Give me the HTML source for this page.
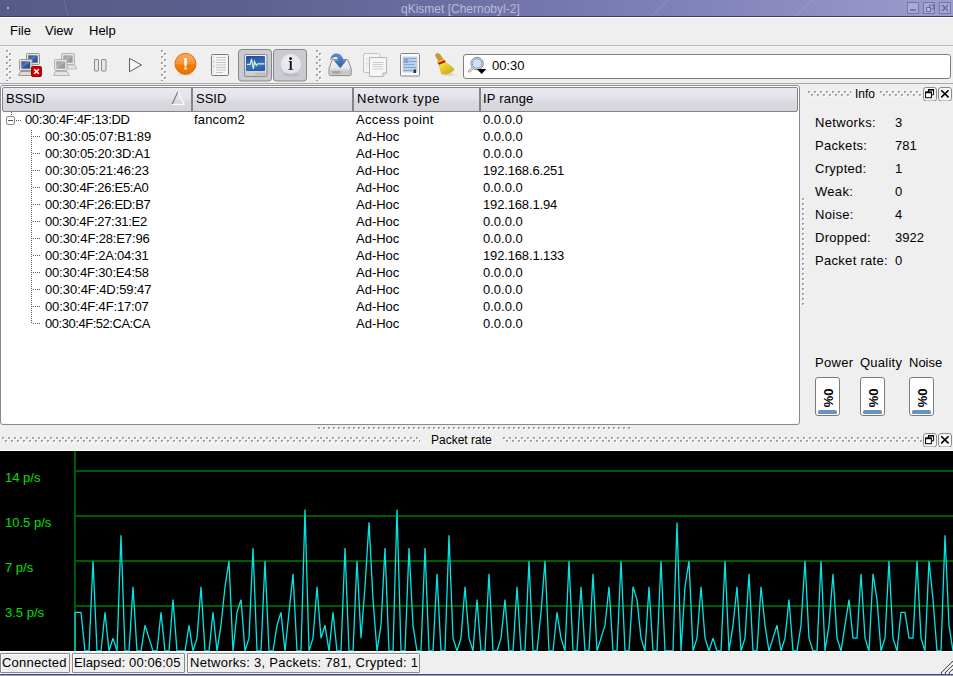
<!DOCTYPE html>
<html><head><meta charset="utf-8">
<style>
*{box-sizing:border-box;margin:0;padding:0}
html,body{width:953px;height:676px;overflow:hidden;background:#efefef;font-family:"Liberation Sans",sans-serif;font-size:13px;color:#000}
.a{position:absolute}
.t{position:absolute;white-space:pre;line-height:15px}
#title{left:0;top:0;width:953px;height:17px;background:linear-gradient(90deg,#585b87 0%,#5d608e 25%,#6e70a6 50%,#8484bc 75%,#9c9ccf 100%);border-bottom:1px solid #3c3f5c}
#title .tt{left:401px;top:2px;color:#b9bad6;font-size:12px;line-height:14px}
.wb{top:2px;width:12px;height:12px;border:1px solid #8a88b8;background:#a9a7d6}
#menu{left:0;top:17px;width:953px;height:29px;background:#efefef;border-top:1px solid #fff;border-bottom:1px solid #b9b9b9}
#tool{left:0;top:46px;width:953px;height:38px;background:#efefef;border-top:1px solid #fafafa;border-bottom:1px solid #a8a8a8}
.handle{width:6px;height:30px;background-image:radial-gradient(circle at 1px 1px,#9a9a9a 0.9px,transparent 1.1px);background-size:3px 6px}
#list{left:0;top:85px;width:800px;height:340px;background:#fff;border:1px solid #8a8a8a;border-radius:3px}
.hdr{top:87px;height:25px;background:linear-gradient(#ebeaf0,#e3e2ea 45%,#dadbe0 55%,#d5d6db);border:1px solid #858585;border-radius:2px}
.hsep{top:88px;width:2px;height:23px;background:#858585}
.row{position:absolute;white-space:pre;line-height:17px;height:17px}
.dock-t{height:11px}
.dots{background-image:radial-gradient(circle at 1.5px 1.5px,#b8b8b8 0.8px,transparent 1px);background-size:4px 3px}
.fbtn{width:14px;height:14px;border:1px solid #7c7c7c;border-radius:2px;background:#f4f4f4}
.pbar{width:25px;height:39px;background:#fff;border:1px solid #7c7c7c;border-radius:3px}
.pbar .blue{left:2px;right:2px;bottom:1px;height:4px;background:#6b92bb;border-radius:2px 2px 1px 1px}
.pbar .pt{left:0;top:10px;width:23px;height:20px;font-weight:bold;font-size:13px;line-height:20px;text-align:center;transform:rotate(90deg)}
#graph{left:0;top:451px;width:953px;height:200px;background:#000}
.gl{color:#00e000;font-size:13px}
.sb{top:653px;height:20px;border:1px solid #8a8a8a;border-radius:1px;background:#efefef;box-shadow:inset 1px 1px 0 #fff}
</style></head><body>

<svg width="0" height="0" style="position:absolute"><defs>
<pattern id="ph" width="6" height="6" patternUnits="userSpaceOnUse"><rect x="2" y="1" width="1" height="2" fill="#fff"/><rect x="1" y="2" width="1" height="1" fill="#fff"/><rect x="0" y="0" width="2" height="1" fill="#9c9c9c"/><rect x="0" y="1" width="1" height="1" fill="#9c9c9c"/><rect x="1" y="1" width="1" height="1" fill="#c4c4c4"/><rect x="5" y="4" width="1" height="2" fill="#fff"/><rect x="4" y="5" width="1" height="1" fill="#fff"/><rect x="3" y="3" width="2" height="1" fill="#9c9c9c"/><rect x="3" y="4" width="1" height="1" fill="#9c9c9c"/><rect x="4" y="4" width="1" height="1" fill="#c4c4c4"/></pattern>
</defs></svg>
<!-- title bar -->
<div id="title" class="a"><svg class="a" style="left:0;top:0" width="953" height="16"><g stroke="#fff" stroke-width="1" opacity="0.13"><path d="M64 0 L68 16"/><path d="M668 0 L652 16"/><path d="M812 0 L796 16"/></g><rect x="7" y="7" width="2" height="2" fill="#b0b4c0"/></svg><div class="a tt">qKismet [Chernobyl-2]</div>
<svg class="a" style="left:906px;top:2px" width="46" height="13">
<g fill="#a9a8d8" stroke="#77769f" stroke-width="1"><rect x="1.5" y="0.5" width="11" height="11"/><rect x="17.5" y="0.5" width="11" height="11"/><rect x="33.5" y="0.5" width="11" height="11"/></g>
<rect x="4" y="7.2" width="6" height="1.6" fill="#6e6d98"/>
<rect x="23.5" y="3" width="4" height="4" fill="none" stroke="#6e6d98" stroke-width="1"/><rect x="20.5" y="5.5" width="4" height="4" fill="#b8b8e0" stroke="#6e6d98" stroke-width="1"/>
<path d="M36 3 L42 9 M42 3 L36 9" stroke="#6e6d98" stroke-width="1.6"/>
</svg>
</div>

<!-- menu -->
<div id="menu" class="a">
<div class="t" style="left:10px;top:5px">File</div>
<div class="t" style="left:45px;top:5px">View</div>
<div class="t" style="left:89px;top:5px">Help</div>
</div>

<!-- toolbar -->
<div id="tool" class="a">
<svg class="a" style="left:6px;top:3px" width="6" height="31"><rect width="6" height="31" fill="url(#ph)"/></svg>
<svg class="a" style="left:161px;top:3px" width="6" height="31"><rect width="6" height="31" fill="url(#ph)"/></svg>
<svg class="a" style="left:316px;top:3px" width="6" height="31"><rect width="6" height="31" fill="url(#ph)"/></svg>
<div class="a" style="left:463px;top:7px;width:488px;height:25px;background:#fff;border:1px solid #7e7e7e;border-radius:3px"></div>
<!--ICONS--><svg class="a" style="left:0;top:-1px" width="500" height="38" viewBox="0 46 500 38">
<defs>
<linearGradient id="gscr" x1="0" y1="0" x2="1" y2="1"><stop offset="0" stop-color="#2e4f8f"/><stop offset="0.5" stop-color="#5a7ab8"/><stop offset="0.52" stop-color="#3a5a9c"/><stop offset="1" stop-color="#2a4a88"/></linearGradient>
<linearGradient id="gscrg" x1="0" y1="0" x2="1" y2="1"><stop offset="0" stop-color="#9a9a9a"/><stop offset="0.5" stop-color="#b4b4b4"/><stop offset="0.52" stop-color="#a0a0a0"/><stop offset="1" stop-color="#989898"/></linearGradient>
<linearGradient id="gor" x1="0" y1="0" x2="0" y2="1"><stop offset="0" stop-color="#f9a850"/><stop offset="0.5" stop-color="#f7953a"/><stop offset="0.55" stop-color="#f57900"/><stop offset="1" stop-color="#f27400"/></linearGradient>
<linearGradient id="gmon" x1="0" y1="0" x2="0" y2="1"><stop offset="0" stop-color="#f4f4f4"/><stop offset="1" stop-color="#c8c8c4"/></linearGradient>
<linearGradient id="gmscr" x1="0" y1="0" x2="0.3" y2="1"><stop offset="0" stop-color="#1f4a9a"/><stop offset="0.7" stop-color="#3a72c8"/><stop offset="1" stop-color="#2a5cb0"/></linearGradient>
<radialGradient id="ginfo" cx="0.45" cy="0.35" r="0.75"><stop offset="0" stop-color="#f0eef2"/><stop offset="0.75" stop-color="#e6e4e8"/><stop offset="1" stop-color="#d2d0d4"/></radialGradient>
<linearGradient id="gdrv" x1="0" y1="0" x2="0" y2="1"><stop offset="0" stop-color="#f8f8f8"/><stop offset="1" stop-color="#dcdcdc"/></linearGradient>
<linearGradient id="gbroom" x1="0" y1="0" x2="1" y2="1"><stop offset="0" stop-color="#fce94f"/><stop offset="1" stop-color="#c4a000"/></linearGradient>
</defs>
<!-- icon 1: network with red x -->
<rect x="26.5" y="53.5" width="13" height="11" rx="1" fill="#e2e2dc" stroke="#98988f"/>
<rect x="28.3" y="55.3" width="9.4" height="7.4" fill="url(#gscr)"/>
<rect x="19.5" y="59.5" width="12.5" height="11" rx="1" fill="#e2e2dc" stroke="#98988f"/>
<rect x="21.3" y="61.3" width="8.9" height="7.4" fill="url(#gscr)"/>
<path d="M20.5 71.5 L30.5 71.5 L32 75.5 L18.5 75.5 Z" fill="#dcdcd6" stroke="#9a9a92"/>
<rect x="31.5" y="66.5" width="10" height="10" rx="1.5" fill="#d40000" stroke="#a00000"/>
<path d="M34.2 69.2 L38.8 73.8 M38.8 69.2 L34.2 73.8" stroke="#fff" stroke-width="1.6"/>
<!-- icon 2: gray network -->
<rect x="61.5" y="53.5" width="13" height="11" rx="1" fill="#e6e6e6" stroke="#b0b0b0"/>
<rect x="63.3" y="55.3" width="9.4" height="7.4" fill="url(#gscrg)"/>
<path d="M67 65 L75 65 L76.5 69 L67 69 Z" fill="#e4e4e4" stroke="#bcbcbc"/>
<rect x="54.5" y="59.5" width="12.5" height="11" rx="1" fill="#e6e6e6" stroke="#b0b0b0"/>
<rect x="56.3" y="61.3" width="8.9" height="7.4" fill="url(#gscrg)"/>
<path d="M55.5 71.5 L67 71.5 L69.5 75.5 L53.5 75.5 Z" fill="#e4e4e4" stroke="#b4b4b4"/>
<!-- pause -->
<rect x="94.5" y="59.5" width="4" height="11.5" rx="0.5" fill="#e6e6e6" stroke="#8c8c8c"/>
<rect x="101.5" y="59.5" width="4.5" height="11.5" rx="0.5" fill="#e6e6e6" stroke="#8c8c8c"/>
<!-- play -->
<path d="M129.5 58.3 L141.5 65 L129.5 71.7 Z" fill="#f6f6f6" stroke="#5e5e5e"/>
<!-- warning orange -->
<ellipse cx="185.5" cy="74" rx="8" ry="2" fill="#000" opacity="0.08"/>
<circle cx="185.5" cy="63.8" r="10.5" fill="url(#gor)" stroke="#ce5c00" stroke-width="0.8"/>
<path d="M184 58 L187 58 L186.5 66.5 L184.5 66.5 Z" fill="#fff"/>
<rect x="184.3" y="67.5" width="2.4" height="2" fill="#fff"/>
<!-- document -->
<rect x="211.5" y="54.5" width="17" height="21" rx="1" fill="#f6f6f6" stroke="#787878"/>
<rect x="213" y="56" width="1.5" height="18" fill="#e6e6e6"/>
<g fill="#c4c4c4"><rect x="216" y="57" width="10" height="1"/><rect x="216" y="59.5" width="10" height="1"/><rect x="216" y="62" width="10" height="1"/><rect x="216" y="64.5" width="10" height="1"/><rect x="216" y="67" width="10" height="1"/><rect x="216" y="69.5" width="10" height="1"/><rect x="216" y="72" width="7" height="1"/></g>
<rect x="213.3" y="61" width="1" height="1" fill="#999"/><rect x="213.3" y="66" width="1" height="1" fill="#999"/>
<!-- toggle buttons -->
<rect x="238.5" y="49.5" width="33" height="31.5" rx="3" fill="#c9cbd3" stroke="#868686"/>
<rect x="273.5" y="49.5" width="33" height="31.5" rx="3" fill="#c9cbd3" stroke="#868686"/>
<!-- monitor -->
<rect x="244.5" y="54.5" width="22.5" height="22" rx="1.5" fill="url(#gmon)" stroke="#8a8a86"/>
<rect x="246" y="56" width="19" height="15" rx="1" fill="url(#gmscr)"/>
<polyline points="247,64.3 250.3,64.3 251.5,58.9 253.4,68.8 254.4,61.4 256.3,65.5 257.7,63.8 264.4,63.8" fill="none" stroke="#d4f6bc" stroke-width="1.2"/>
<g fill="none" stroke="#a8a8a4" stroke-width="0.6"><circle cx="256.5" cy="73.8" r="0.9"/><circle cx="259" cy="73.8" r="0.9"/><circle cx="261.5" cy="73.8" r="0.9"/><circle cx="264" cy="73.8" r="0.9"/></g>
<!-- info -->
<ellipse cx="291" cy="74.5" rx="8" ry="2" fill="#000" opacity="0.08"/>
<circle cx="290.9" cy="64.1" r="10.2" fill="url(#ginfo)"/>
<circle cx="290.6" cy="58.6" r="1.35" fill="#000"/><path d="M288.6 61 L291.7 61 L291.7 68.7 C292.3 68.9 293 69.1 293.2 69.7 L288.2 69.7 C288.4 69.1 289.1 68.9 289.8 68.7 L289.8 62 C289.4 61.8 288.8 61.7 288.6 61.6 Z" fill="#111"/>
<!-- drive with arrow -->
<linearGradient id="gdrv2" x1="0" y1="0" x2="0" y2="1"><stop offset="0" stop-color="#f6f6f6"/><stop offset="0.55" stop-color="#e6e6e6"/><stop offset="0.6" stop-color="#d4d4d4"/><stop offset="1" stop-color="#cbcbcb"/></linearGradient>
<linearGradient id="garr" x1="0" y1="0" x2="0" y2="1"><stop offset="0" stop-color="#5b8fd0"/><stop offset="1" stop-color="#2f5fa8"/></linearGradient>
<path d="M332.3 59.5 L347.6 59.5 L351.2 68.5 L351.2 74 Q351.2 75.6 349.6 75.6 L330.6 75.6 Q329 75.6 329 74 L329 68.5 Z" fill="url(#gdrv2)" stroke="#8c8c8c"/>
<rect x="331.8" y="71" width="8.7" height="2.8" fill="#a6a6a6"/>
<g fill="#b4b4b4"><rect x="342" y="71" width="1" height="2.8"/><rect x="345" y="71" width="1" height="2.8"/><rect x="348" y="71" width="1" height="2.8"/></g>
<path d="M330.6 59.6 C330.9 55.8 333.6 53.8 336.7 53.8 C340 53.8 342.6 56.3 343 60.2 L346.2 60.6 L340.3 67.9 L334 60.6 L338.5 60.4 C338.2 58.3 337.3 56.7 335.9 56.7 C333.6 56.7 331.8 58 330.6 59.6 Z" fill="url(#garr)" stroke="#3465a4" stroke-width="0.4"/>
<!-- copy (disabled) -->
<rect x="363.5" y="53.5" width="16.5" height="19" rx="1.5" fill="#f4f4f4" stroke="#c2c2c2"/>
<path d="M369.5 57.5 L386.5 57.5 L386.5 73 L383 76.5 L369.5 76.5 Z" fill="#f6f6f6" stroke="#b4b4b4"/>
<path d="M383 76.5 L383 73 L386.5 73" fill="#e0e0e0" stroke="#b4b4b4"/>
<g fill="#cacaca"><rect x="372.5" y="62" width="11" height="0.9"/><rect x="372.5" y="64" width="11" height="0.9"/><rect x="372.5" y="66.2" width="10" height="0.9"/><rect x="372.5" y="68.5" width="11" height="0.9"/></g>
<g fill="#dadada"><rect x="366" y="58" width="2.5" height="0.8"/><rect x="366" y="60.5" width="2.5" height="0.8"/><rect x="366" y="63" width="2.5" height="0.8"/><rect x="366" y="65.5" width="2.5" height="0.8"/></g>
<!-- blue doc -->
<rect x="400.5" y="53.5" width="19" height="22.5" rx="1" fill="#fdfdfd" stroke="#858585"/>
<rect x="402.5" y="56.5" width="15" height="16" fill="#bcd3ec"/>
<rect x="403.5" y="58" width="5" height="5" fill="#8aa6c8"/>
<g fill="#7f9ec4"><rect x="409.5" y="58" width="7" height="0.9"/><rect x="409.5" y="61" width="7" height="0.9"/><rect x="403.5" y="64.2" width="11" height="0.9"/><rect x="403.5" y="67" width="13" height="0.9"/><rect x="403.5" y="70" width="9" height="0.9"/></g>
<rect x="413.5" y="69.5" width="2.5" height="3.5" fill="#333"/>
<!-- broom -->
<ellipse cx="449" cy="74.5" rx="6" ry="1.5" fill="#000" opacity="0.1"/>
<path d="M435.6 55.6 C435.2 53.4 438.6 52.6 439.9 54.5 L443 59.2 L438.6 61 Z" fill="#c99a3c" stroke="#a8761c" stroke-width="0.5"/>
<path d="M437.2 61.8 L443.4 58.9 L444.6 60.8 L438.4 63.4 Z" fill="#edd400" stroke="#c4a000" stroke-width="0.4"/>
<path d="M438.2 63.2 L444.6 60.4 L445.6 62.5 L439.3 65.1 Z" fill="#cc0000" stroke="#a40000" stroke-width="0.4"/>
<path d="M439.2 64.8 L445.5 62.2 C449 64.5 452 66.8 454.3 69.2 C452.5 72.2 448 74.6 441.5 74.2 C440.6 70.8 439.7 67.8 439.2 64.8 Z" fill="url(#gbroom)" stroke="#d4b000" stroke-width="0.4"/>
<!-- combo magnifier -->
<path d="M473.5 67.5 L469.2 71.2" stroke="#8a8a8a" stroke-width="2.6" stroke-linecap="round"/>
<path d="M473.5 67.5 L469.2 71.2" stroke="#f0f0f0" stroke-width="1.2" stroke-linecap="round"/>
<circle cx="477.1" cy="63.5" r="6.2" fill="#ededed" stroke="#8a8a8a" stroke-width="1"/>
<circle cx="477.1" cy="63.5" r="4.8" fill="#cfe0f6" stroke="#6d9ee0" stroke-width="1"/>
<path d="M477 69 L486.3 69 L481.6 74 Z" fill="#000"/>
</svg>
<!--/ICONS-->
<div class="t" style="left:492px;top:11px">00:30</div>
</div>

<!-- list view -->
<div id="list" class="a"></div>
<div class="a hdr" style="left:2px;width:796px"></div>
<div class="a hsep" style="left:191px"></div>
<div class="a hsep" style="left:352px"></div>
<div class="a hsep" style="left:479px"></div>
<svg class="a" style="left:170px;top:90px" width="16" height="16"><path d="M2 14.5 L8 1.5" stroke="#7c7c7c" stroke-width="1.2" fill="none"/><path d="M8 1.5 L14 14.5 L2 14.5" stroke="#fdfdfd" stroke-width="1.2" fill="none"/></svg>
<div class="t" style="left:6px;top:91px">BSSID</div>
<div class="t" style="left:196px;top:91px">SSID</div>
<div class="t" style="left:357px;top:91px;letter-spacing:0.6px">Network type</div>
<div class="t" style="left:483px;top:91px;letter-spacing:0.2px">IP range</div>
<div class="row" style="left:25px;top:111px;letter-spacing:-0.36px">00:30:4F:4F:13:DD</div>
<div class="row" style="left:194px;top:111px;letter-spacing:0.16px">fancom2</div>
<div class="row" style="left:356px;top:111px;letter-spacing:0.33px">Access point</div>
<div class="row" style="left:483px;top:111px">0.0.0.0</div>
<div class="row" style="left:45px;top:128px;letter-spacing:0px">00:30:05:07:B1:89</div>
<div class="row" style="left:356px;top:128px">Ad-Hoc</div>
<div class="row" style="left:483px;top:128px">0.0.0.0</div>
<div class="row" style="left:45px;top:145px;letter-spacing:-0.19px">00:30:05:20:3D:A1</div>
<div class="row" style="left:356px;top:145px">Ad-Hoc</div>
<div class="row" style="left:483px;top:145px">0.0.0.0</div>
<div class="row" style="left:45px;top:162px;letter-spacing:-0.06px">00:30:05:21:46:23</div>
<div class="row" style="left:356px;top:162px">Ad-Hoc</div>
<div class="row" style="left:483px;top:162px;letter-spacing:-0.15px">192.168.6.251</div>
<div class="row" style="left:45px;top:179px;letter-spacing:-0.29px">00:30:4F:26:E5:A0</div>
<div class="row" style="left:356px;top:179px">Ad-Hoc</div>
<div class="row" style="left:483px;top:179px">0.0.0.0</div>
<div class="row" style="left:45px;top:196px;letter-spacing:-0.3px">00:30:4F:26:ED:B7</div>
<div class="row" style="left:356px;top:196px">Ad-Hoc</div>
<div class="row" style="left:483px;top:196px;letter-spacing:-0.15px">192.168.1.94</div>
<div class="row" style="left:45px;top:213px;letter-spacing:-0.3px">00:30:4F:27:31:E2</div>
<div class="row" style="left:356px;top:213px">Ad-Hoc</div>
<div class="row" style="left:483px;top:213px">0.0.0.0</div>
<div class="row" style="left:45px;top:230px;letter-spacing:-0.14px">00:30:4F:28:E7:96</div>
<div class="row" style="left:356px;top:230px">Ad-Hoc</div>
<div class="row" style="left:483px;top:230px">0.0.0.0</div>
<div class="row" style="left:45px;top:247px;letter-spacing:-0.2px">00:30:4F:2A:04:31</div>
<div class="row" style="left:356px;top:247px">Ad-Hoc</div>
<div class="row" style="left:483px;top:247px;letter-spacing:-0.15px">192.168.1.133</div>
<div class="row" style="left:45px;top:264px;letter-spacing:-0.18px">00:30:4F:30:E4:58</div>
<div class="row" style="left:356px;top:264px">Ad-Hoc</div>
<div class="row" style="left:483px;top:264px">0.0.0.0</div>
<div class="row" style="left:45px;top:281px;letter-spacing:-0.08px">00:30:4F:4D:59:47</div>
<div class="row" style="left:356px;top:281px">Ad-Hoc</div>
<div class="row" style="left:483px;top:281px">0.0.0.0</div>
<div class="row" style="left:45px;top:298px;letter-spacing:-0.15px">00:30:4F:4F:17:07</div>
<div class="row" style="left:356px;top:298px">Ad-Hoc</div>
<div class="row" style="left:483px;top:298px">0.0.0.0</div>
<div class="row" style="left:45px;top:315px;letter-spacing:-0.46px">00:30:4F:52:CA:CA</div>
<div class="row" style="left:356px;top:315px">Ad-Hoc</div>
<div class="row" style="left:483px;top:315px">0.0.0.0</div>
<div class="a" style="left:11px;top:112px;width:1px;height:4px;background-image:linear-gradient(#555 50%,transparent 50%);background-size:1px 2px"></div>
<div class="a" style="left:6px;top:116px;width:9px;height:9px;border:1px solid #8a8a8a;border-radius:2px;background:#fff"></div>
<div class="a" style="left:8px;top:120px;width:5px;height:1px;background:#555"></div>
<div class="a" style="left:16px;top:120px;width:5px;height:1px;background-image:linear-gradient(90deg,#555 50%,transparent 50%);background-size:2px 1px"></div>
<div class="a" style="left:31px;top:130px;width:1px;height:194px;background-image:linear-gradient(#555 50%,transparent 50%);background-size:1px 2px"></div>
<div class="a" style="left:32px;top:136px;width:9px;height:1px;background-image:linear-gradient(90deg,transparent 50%,#555 50%);background-size:2px 1px"></div>
<div class="a" style="left:32px;top:153px;width:9px;height:1px;background-image:linear-gradient(90deg,transparent 50%,#555 50%);background-size:2px 1px"></div>
<div class="a" style="left:32px;top:170px;width:9px;height:1px;background-image:linear-gradient(90deg,transparent 50%,#555 50%);background-size:2px 1px"></div>
<div class="a" style="left:32px;top:187px;width:9px;height:1px;background-image:linear-gradient(90deg,transparent 50%,#555 50%);background-size:2px 1px"></div>
<div class="a" style="left:32px;top:204px;width:9px;height:1px;background-image:linear-gradient(90deg,transparent 50%,#555 50%);background-size:2px 1px"></div>
<div class="a" style="left:32px;top:221px;width:9px;height:1px;background-image:linear-gradient(90deg,transparent 50%,#555 50%);background-size:2px 1px"></div>
<div class="a" style="left:32px;top:238px;width:9px;height:1px;background-image:linear-gradient(90deg,transparent 50%,#555 50%);background-size:2px 1px"></div>
<div class="a" style="left:32px;top:255px;width:9px;height:1px;background-image:linear-gradient(90deg,transparent 50%,#555 50%);background-size:2px 1px"></div>
<div class="a" style="left:32px;top:272px;width:9px;height:1px;background-image:linear-gradient(90deg,transparent 50%,#555 50%);background-size:2px 1px"></div>
<div class="a" style="left:32px;top:289px;width:9px;height:1px;background-image:linear-gradient(90deg,transparent 50%,#555 50%);background-size:2px 1px"></div>
<div class="a" style="left:32px;top:306px;width:9px;height:1px;background-image:linear-gradient(90deg,transparent 50%,#555 50%);background-size:2px 1px"></div>
<div class="a" style="left:32px;top:323px;width:9px;height:1px;background-image:linear-gradient(90deg,transparent 50%,#555 50%);background-size:2px 1px"></div>

<!-- info dock -->
<svg class="a" style="left:808px;top:91px" width="43" height="6"><rect width="43" height="6" fill="url(#ph)"/></svg>
<div class="t" style="left:855px;top:87px;font-size:12px">Info</div>
<svg class="a" style="left:880px;top:91px" width="42" height="6"><rect width="42" height="6" fill="url(#ph)"/></svg>
<svg class="a" style="left:923px;top:87px" width="14" height="14"><rect x="0.5" y="0.5" width="13" height="13.5" rx="2.5" fill="#f6f6f8" stroke="#8a8a8a"/><path d="M5 2.6 L10.6 2.6 L10.6 7.8 L9 7.8 M5.4 2.6 L5.4 5" fill="none" stroke="#000" stroke-width="1"/><rect x="5" y="2" width="6" height="1.6" fill="#000"/><rect x="2.6" y="5.1" width="5.8" height="5.6" fill="#fff" stroke="#000" stroke-width="1"/><rect x="2.1" y="4.6" width="6.8" height="1.6" fill="#000"/></svg>
<svg class="a" style="left:938px;top:87px" width="14" height="14"><rect x="0.5" y="0.5" width="13" height="13.5" rx="2.5" fill="#f6f6f8" stroke="#8a8a8a"/><path d="M3.2 3.2 L10.6 10.4 M10.6 3.2 L3.2 10.4" stroke="#000" stroke-width="1.6"/></svg>
<div class="t" style="left:815px;top:115px;letter-spacing:0.35px">Networks:</div><div class="t" style="left:895px;top:115px">3</div>
<div class="t" style="left:815px;top:138px;letter-spacing:0.3px">Packets:</div><div class="t" style="left:895px;top:138px">781</div>
<div class="t" style="left:815px;top:161px;letter-spacing:0.3px">Crypted:</div><div class="t" style="left:895px;top:161px">1</div>
<div class="t" style="left:815px;top:184px;letter-spacing:0.3px">Weak:</div><div class="t" style="left:895px;top:184px">0</div>
<div class="t" style="left:815px;top:207px;letter-spacing:0.3px">Noise:</div><div class="t" style="left:895px;top:207px">4</div>
<div class="t" style="left:815px;top:230px;letter-spacing:0.3px">Dropped:</div><div class="t" style="left:895px;top:230px">3922</div>
<div class="t" style="left:815px;top:253px;letter-spacing:0.3px">Packet rate:</div><div class="t" style="left:895px;top:253px">0</div>
<svg class="a" style="left:802px;top:198px" width="3" height="108"><defs><pattern id="pv" width="3" height="5" patternUnits="userSpaceOnUse"><rect x="2" y="1" width="1" height="2" fill="#fff"/><rect x="1" y="2" width="1" height="1" fill="#fff"/><rect x="0" y="0" width="2" height="1" fill="#9c9c9c"/><rect x="0" y="1" width="1" height="1" fill="#9c9c9c"/><rect x="1" y="1" width="1" height="1" fill="#c4c4c4"/></pattern></defs><rect width="3" height="108" fill="url(#pv)"/></svg>
<div class="t" style="left:815px;top:355px;letter-spacing:0.3px">Power</div>
<div class="t" style="left:860px;top:355px;letter-spacing:0.25px">Quality</div>
<div class="t" style="left:909px;top:355px">Noise</div>
<div class="a pbar" style="left:815px;top:377px"><div class="a blue"></div><div class="a pt">0%</div></div>
<div class="a pbar" style="left:860px;top:377px"><div class="a blue"></div><div class="a pt">0%</div></div>
<div class="a pbar" style="left:909px;top:377px"><div class="a blue"></div><div class="a pt">0%</div></div>


<!-- packet rate dock -->
<svg class="a" style="left:318px;top:427px" width="313" height="3"><defs><pattern id="ps" width="5" height="3" patternUnits="userSpaceOnUse"><rect x="2" y="1" width="1" height="2" fill="#fff"/><rect x="1" y="2" width="1" height="1" fill="#fff"/><rect x="0" y="0" width="2" height="1" fill="#9c9c9c"/><rect x="0" y="1" width="1" height="1" fill="#9c9c9c"/><rect x="1" y="1" width="1" height="1" fill="#c4c4c4"/></pattern></defs><rect width="313" height="3" fill="url(#ps)"/></svg>
<svg class="a" style="left:2px;top:437px" width="418" height="6"><rect width="418" height="6" fill="url(#ph)"/></svg>
<div class="t" style="left:431px;top:433px;font-size:12px">Packet rate</div>
<svg class="a" style="left:503px;top:437px" width="419" height="6"><rect width="419" height="6" fill="url(#ph)"/></svg>
<svg class="a" style="left:923px;top:433px" width="14" height="14"><rect x="0.5" y="0.5" width="13" height="13.5" rx="2.5" fill="#f6f6f8" stroke="#8a8a8a"/><path d="M5 2.6 L10.6 2.6 L10.6 7.8 L9 7.8 M5.4 2.6 L5.4 5" fill="none" stroke="#000" stroke-width="1"/><rect x="5" y="2" width="6" height="1.6" fill="#000"/><rect x="2.6" y="5.1" width="5.8" height="5.6" fill="#fff" stroke="#000" stroke-width="1"/><rect x="2.1" y="4.6" width="6.8" height="1.6" fill="#000"/></svg>
<svg class="a" style="left:938px;top:433px" width="14" height="14"><rect x="0.5" y="0.5" width="13" height="13.5" rx="2.5" fill="#f6f6f8" stroke="#8a8a8a"/><path d="M3.2 3.2 L10.6 10.4 M10.6 3.2 L3.2 10.4" stroke="#000" stroke-width="1.6"/></svg>
<div class="a" style="left:0;top:450px;width:953px;height:1px;background:#fff"></div>

<div id="graph" class="a"></div>
<!--GRAPH--><svg class="a" style="left:0;top:451px" width="953" height="200" viewBox="0 451 953 200">
<rect x="74" y="451" width="2" height="200" fill="#005c00"/>
<rect x="76" y="470" width="877" height="2" fill="#005c00"/>
<rect x="76" y="515" width="877" height="2" fill="#005c00"/>
<rect x="76" y="560" width="877" height="2" fill="#005c00"/>
<rect x="76" y="605" width="877" height="2" fill="#005c00"/>
<polyline points="75,652 75,612.4 77,612.4 81,612.4 85,651.0 89,651.0 93,561.0 97,651.0 101,651.0 105,612.4 109,651.0 113,638.1 117,651.0 121,535.3 125,651.0 129,651.0 133,586.7 137,651.0 141,651.0 145,625.3 149,638.1 153,651.0 157,651.0 161,612.4 165,651.0 169,651.0 173,599.6 177,651.0 181,651.0 185,651.0 189,625.3 193,651.0 197,638.1 201,586.7 205,651.0 209,651.0 213,612.4 217,651.0 221,625.3 225,586.7 229,561.0 233,651.0 237,612.4 241,599.6 245,651.0 249,638.1 253,548.1 257,651.0 261,651.0 265,561.0 269,651.0 273,651.0 277,625.3 281,612.4 285,651.0 289,612.4 293,573.9 297,651.0 301,651.0 305,509.6 309,651.0 313,638.1 317,586.7 321,638.1 325,625.3 329,651.0 333,612.4 337,651.0 341,651.0 345,548.1 349,651.0 353,651.0 357,561.0 361,638.1 365,586.7 369,522.4 373,599.6 377,651.0 381,625.3 385,548.1 389,651.0 393,651.0 397,509.6 401,651.0 405,651.0 409,548.1 413,625.3 417,651.0 421,651.0 425,548.1 429,651.0 433,651.0 437,573.9 441,651.0 445,651.0 449,535.3 453,638.1 457,651.0 461,638.1 465,586.7 469,638.1 473,651.0 477,599.6 481,651.0 485,651.0 489,573.9 493,651.0 497,651.0 501,638.1 505,599.6 509,651.0 513,651.0 517,586.7 521,651.0 525,651.0 529,561.0 533,651.0 537,651.0 541,612.4 545,561.0 549,651.0 553,651.0 557,612.4 561,638.1 565,651.0 569,561.0 573,651.0 577,651.0 581,586.7 585,651.0 589,651.0 593,573.9 597,651.0 601,638.1 605,625.3 609,586.7 613,651.0 617,651.0 621,561.0 625,651.0 629,651.0 633,586.7 637,599.6 641,638.1 645,651.0 649,586.7 653,651.0 657,651.0 661,561.0 665,651.0 669,651.0 673,651.0 677,522.4 681,651.0 685,586.7 689,561.0 693,651.0 697,638.1 701,586.7 705,638.1 709,651.0 713,638.1 717,651.0 721,651.0 725,561.0 729,651.0 733,625.3 737,586.7 741,651.0 745,638.1 749,573.9 753,651.0 757,651.0 761,586.7 765,625.3 769,651.0 773,638.1 777,625.3 781,651.0 785,638.1 789,599.6 793,651.0 797,651.0 801,625.3 805,561.0 809,638.1 813,651.0 817,651.0 821,561.0 825,651.0 829,625.3 833,573.9 837,638.1 841,651.0 845,625.3 849,599.6 853,638.1 857,638.1 861,573.9 865,638.1 869,651.0 873,573.9 877,599.6 881,651.0 885,638.1 889,561.0 893,638.1 897,651.0 901,612.4 905,612.4 909,638.1 913,638.1 917,561.0 921,638.1 925,651.0 929,561.0 933,599.6 937,651.0 941,651.0 945,535.3 949,625.3 953,651.0" fill="none" stroke="#00e6e6" stroke-width="1.3" stroke-linejoin="bevel"/>
</svg>
<div class="t gl" style="left:5px;top:470px">14 p/s</div>
<div class="t gl" style="left:5px;top:515px">10.5 p/s</div>
<div class="t gl" style="left:5px;top:560px">7 p/s</div>
<div class="t gl" style="left:5px;top:605px">3.5 p/s</div>
<!--/GRAPH-->

<!-- status bar -->
<div class="a sb" style="left:0px;width:70px"></div>
<div class="a sb" style="left:72px;width:113px"></div>
<div class="a sb" style="left:187px;width:233px"></div>
<div class="t" style="left:2px;top:655px;letter-spacing:0.2px">Connected</div>
<div class="t" style="left:74px;top:655px;letter-spacing:0.1px">Elapsed: 00:06:05</div>
<div class="t" style="left:190px;top:655px;letter-spacing:0.27px">Networks: 3, Packets: 781, Crypted: 1</div>
<div class="a" style="left:0;top:651px;width:953px;height:1px;background:#fff"></div>
<div class="a" style="left:0;top:674px;width:953px;height:1px;background:#4a4a60"></div>
<div class="a" style="left:0;top:675px;width:953px;height:1px;background:#9d9ccb"></div>
<svg class="a" style="left:940px;top:660px" width="13" height="14"><g stroke-width="1.2"><path d="M1 13.5 L13 1.5" stroke="#222"/><path d="M2 13.5 L13 2.5" stroke="#fff"/><path d="M5 13.5 L13 5.5" stroke="#222"/><path d="M6 13.5 L13 6.5" stroke="#fff"/><path d="M9 13.5 L13 9.5" stroke="#222"/><path d="M10 13.5 L13 10.5" stroke="#fff"/></g></svg>
</body></html>
